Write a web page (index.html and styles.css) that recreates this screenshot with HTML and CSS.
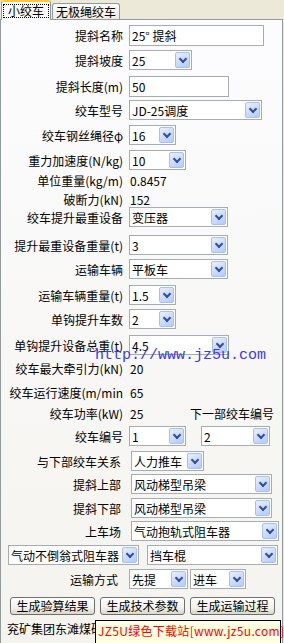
FILE: index.html
```html
<!DOCTYPE html>
<html lang="zh-CN">
<head>
    <meta charset="UTF-8">
    <title>小绞车</title>
    <link rel="stylesheet" href="styles.css">
</head>
<body>
    <div class="tabs">
        <div class="tab active"><span class="focus">小绞车</span></div>
        <div class="tab">无极绳绞车</div>
    </div>

    <div class="panel">
        <div class="form">
            <div class="row"><span class="lbl">提斜名称</span><div class="edit w135">25°&nbsp;提斜</div></div>
            <div class="row"><span class="lbl">提斜坡度</span><div class="combo w63"><span class="val">25</span><span class="btn"></span></div></div>
            <div class="row"><span class="lbl">提斜长度(m)</span><div class="edit w100">50</div></div>
            <div class="row"><span class="lbl">绞车型号</span><div class="combo w133"><span class="val">JD-25调度</span><span class="btn"></span></div></div>
            <div class="row"><span class="lbl">绞车钢丝绳径φ</span><div class="combo w47"><span class="val">16</span><span class="btn"></span></div></div>
            <div class="row"><span class="lbl">重力加速度(N/kg)</span><div class="combo w57"><span class="val">10</span><span class="btn"></span></div></div>
            <div class="row text"><span class="lbl">单位重量(kg/m)</span><span class="out">0.8457</span></div>
            <div class="row text"><span class="lbl">破断力(kN)</span><span class="out">152</span></div>
            <div class="row"><span class="lbl">绞车提升最重设备</span><div class="combo w99"><span class="val">变压器</span><span class="btn"></span></div></div>
            <div class="row"><span class="lbl">提升最重设备重量(t)</span><div class="combo w99"><span class="val">3</span><span class="btn"></span></div></div>
            <div class="row"><span class="lbl">运输车辆</span><div class="combo w99"><span class="val">平板车</span><span class="btn"></span></div></div>
            <div class="row"><span class="lbl">运输车辆重量(t)</span><div class="combo w47"><span class="val">1.5</span><span class="btn"></span></div></div>
            <div class="row"><span class="lbl">单钩提升车数</span><div class="combo w47"><span class="val">2</span><span class="btn"></span></div></div>
            <div class="row"><span class="lbl">单钩提升设备总重(t)</span><div class="combo w100"><span class="val">4.5</span><span class="btn"></span></div></div>
            <div class="row text"><span class="lbl">绞车最大牵引力(kN)</span><span class="out">20</span></div>
            <div class="row text"><span class="lbl">绞车运行速度(m/min</span><span class="out">65</span></div>
            <div class="row text"><span class="lbl">绞车功率(kW)</span><span class="out w61">25</span><span>下一部绞车编号</span></div>
            <div class="row"><span class="lbl">绞车编号</span><div class="combo w57"><span class="val">1</span><span class="btn"></span></div><div class="combo w69 next"><span class="val">2</span><span class="btn"></span></div></div>
            <div class="row wide"><span class="lbl">与下部绞车关系</span><div class="combo w73"><span class="val">人力推车</span><span class="btn"></span></div></div>
            <div class="row wide"><span class="lbl">提斜上部</span><div class="combo w141"><span class="val">风动梯型吊梁</span><span class="btn"></span></div></div>
            <div class="row wide"><span class="lbl">提斜下部</span><div class="combo w141"><span class="val">风动梯型吊梁</span><span class="btn"></span></div></div>
            <div class="row wide"><span class="lbl">上车场</span><div class="combo w148"><span class="val">气动抱轨式阻车器</span><span class="btn"></span></div></div>
            <div class="row pair"><div class="combo w131"><span class="val">气动不倒翁式阻车器</span><span class="btn"></span></div><div class="combo w131"><span class="val">挡车棍</span><span class="btn"></span></div></div>
            <div class="row"><span class="lbl short">运输方式</span><div class="combo w59"><span class="val">先提</span><span class="btn"></span></div><div class="combo w56"><span class="val">进车</span><span class="btn"></span></div></div>
            <div class="row buttons">
                <button class="push">生成验算结果</button>
                <button class="push">生成技术参数</button>
                <button class="push">生成运输过程</button>
            </div>
            <div class="row text footer">兖矿集团东滩煤矿</div>
        </div>

        <div class="mark-url">http://www.jz5u.com</div>
        <div class="mark-tip">JZ5U绿色下载站[www.jz5u.com]</div>
    </div>
</body>
</html>
```

FILE: styles.css
```css
* {
    margin: 0;
    padding: 0;
    box-sizing: border-box;
}

body {
    width: 284px;
    height: 643px;
    overflow: hidden;
    background: #ECE9D8;
    font-family: "Noto Sans CJK SC", "Liberation Sans", sans-serif;
    font-size: 12px;
    color: #000;
}

/* tab strip */
.tabs {
    height: 19px;
    display: flex;
    align-items: flex-end;
    padding-left: 1px;
    position: relative;
    z-index: 1;
}

.tab {
    height: 16px;
    padding: 0 3px;
    border: 1px solid #919B9C;
    border-bottom: none;
    border-radius: 3px 3px 0 0;
    background: linear-gradient(#FFFFFF, #ECEBE6);
    line-height: 15px;
    white-space: nowrap;
}

.tab.active {
    height: 20px;
    width: 50px;
    margin-bottom: -1px;
    margin-right: 1px;
    padding: 2px 1px 0;
    border-top: 2px solid #FFC83C;
    background: #FCFCFE;
}

.focus {
    display: block;
    height: 14px;
    border: 1px dotted #000;
    line-height: 12px;
    text-align: center;
}

/* panel */
.panel {
    position: relative;
    width: 283px;
    height: 624px;
    border: 1px solid #919B9C;
    border-bottom: none;
    background: linear-gradient(#FCFCFE, #F4F3EE);
}

.form {
    display: grid;
    grid-template-rows: 25px 25px 26px 24px 25px 25px 18px 19px 20px 28px 24px 26px 24px 26px 21px 24px 21px 25px 25px 23px 24px 23px 24px 24px 26px 21px;
    align-items: end;
}

.row {
    height: 20px;
    display: flex;
    align-items: center;
    white-space: nowrap;
}

.row.text {
    height: 16px;
}

.lbl {
    width: 122px;
    margin-right: 6px;
    text-align: right;
}

.lbl.short {
    width: 117px;
    margin-right: 11px;
}

.wide .lbl {
    width: 120px;
    margin-right: 10px;
}

.out {
    padding-left: 1px;
}

.w61 {
    width: 61px;
}

/* edit boxes and combo boxes */
.edit,
.combo {
    height: 20px;
    border: 1px solid #A5ACB2;
    background: #FFFFFF;
    display: flex;
    align-items: center;
}

.edit {
    height: 21px;
    padding-left: 2px;
}

.val {
    flex: 1;
    padding-left: 2px;
    overflow: hidden;
}

.btn {
    width: 15px;
    height: 16px;
    margin-right: 1px;
    border: 1px solid #A8BFF2;
    border-radius: 2px;
    background: linear-gradient(150deg, #E8EFFF 0%, #C9D9FC 60%, #B4CAF8 100%);
    display: flex;
    justify-content: center;
}

.btn::after {
    content: '';
    width: 4px;
    height: 4px;
    margin-top: 3px;
    border-right: 2px solid #2D4E9E;
    border-bottom: 2px solid #2D4E9E;
    transform: rotate(45deg);
}

.w47 { width: 47px; }
.w56 { width: 56px; }
.w57 { width: 57px; }
.w59 { width: 59px; }
.w63 { width: 63px; }
.w69 { width: 69px; }
.w73 { width: 73px; }
.w99 { width: 99px; }
.w100 { width: 100px; }
.w131 { width: 131px; }
.w133 { width: 133px; }
.w135 { width: 135px; }
.w141 { width: 141px; }
.w148 { width: 148px; }

.combo.next {
    margin-left: 15px;
}

.pair {
    padding-left: 7px;
    gap: 6px;
}

.pair .combo:last-child,
.row .w56 {
    margin-left: 2px;
}

/* push buttons */
.buttons {
    height: 18px;
    padding-left: 9px;
    gap: 5px;
}

.push {
    width: 85px;
    height: 18px;
    border: 1px solid #6F6F6F;
    border-radius: 3px;
    background: linear-gradient(#FFFFFF 0%, #F3F2EC 60%, #D9D6CA 100%);
    font-family: inherit;
    font-size: 12px;
    line-height: 14px;
}

.footer {
    padding-left: 6px;
}

/* watermarks laid over the form */
.mark-url {
    position: absolute;
    left: 94px;
    top: 328px;
    font-family: "Liberation Mono", monospace;
    font-size: 15px;
    line-height: 16px;
    color: #3A3AF2;
}

.mark-tip {
    position: absolute;
    left: 94px;
    top: 600px;
    width: 186px;
    height: 24px;
    border: 1px solid #000;
    background: #FFFFE1;
    color: #FF0000;
    font-size: 12px;
    letter-spacing: 0.3px;
    line-height: 20px;
    padding-left: 2px;
    white-space: nowrap;
}
```
